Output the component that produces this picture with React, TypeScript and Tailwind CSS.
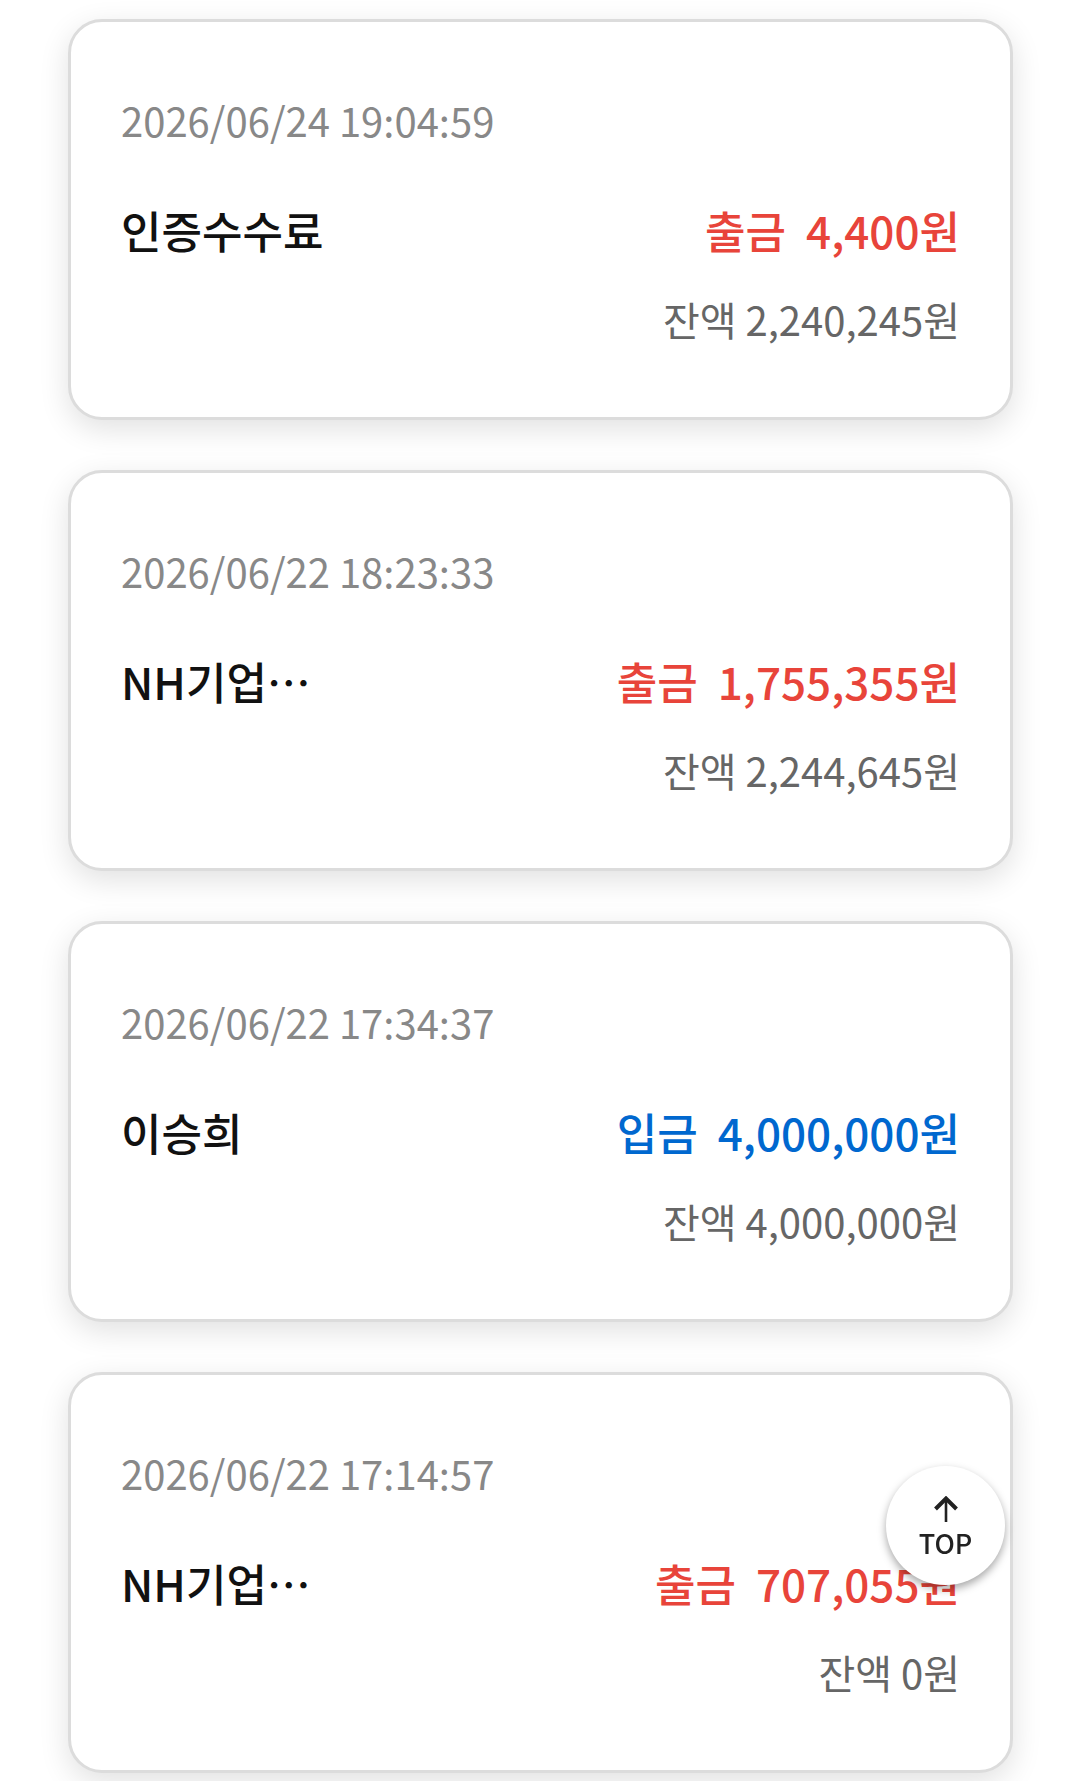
interface Transaction { id: number; date: string; name: string; kind: '입금' | '출금'; amount: string; balance: string }

const transactions: Transaction[] = [
  { id: 1, date: '2026/06/24 19:04:59', name: '인증수수료', kind: '출금', amount: '4,400', balance: '2,240,245' },
  { id: 2, date: '2026/06/22 18:23:33', name: 'NH기업⋯', kind: '출금', amount: '1,755,355', balance: '2,244,645' },
  { id: 3, date: '2026/06/22 17:34:37', name: '이승희', kind: '입금', amount: '4,000,000', balance: '4,000,000' },
  { id: 4, date: '2026/06/22 17:14:57', name: 'NH기업⋯', kind: '출금', amount: '707,055', balance: '0' },
]

export default function App() {
  return (
    <div className="bg-white font-['Noto_Sans_CJK_KR',sans-serif]">
      <ul className="flex flex-col gap-[50px] pt-[19px] pr-[67px] pb-2 pl-[68px]">
        {transactions.map(t => (
          <li key={t.id} className="rounded-[34px] border-3 border-[#dcdcdc] bg-white px-[50px] pt-[66px] pb-[66px] shadow-[0_9px_30px_rgba(0,0,0,0.12)]">
            <time className="block text-[40px] leading-[64px] text-[#888]">{t.date}</time>
            <div className="mt-[44px] flex items-center justify-between text-[44px] leading-[68px] font-medium">
              <strong className="font-medium text-[#111]">{t.name}</strong>
              <span className={`flex gap-[20px] ${t.kind === '입금' ? 'text-[#0068cf]' : 'text-[#e8443a]'}`}>
                <span>{t.kind}</span>
                <span>{t.amount}원</span>
              </span>
            </div>
            <p className="mt-[23px] text-right text-[40px] leading-[64px] text-[#666]">잔액 {t.balance}원</p>
          </li>
        ))}
      </ul>
      <button
        onClick={() => window.scrollTo({ top: 0, behavior: 'smooth' })}
        className="fixed right-[75px] bottom-[196px] flex size-[119px] flex-col items-center justify-center gap-1 rounded-full bg-white pt-[4px] text-[27px] leading-[34px] font-medium text-[#222] shadow-[0_4px_8px_rgba(0,0,0,0.35)]"
      >
        <svg width="24" height="26" viewBox="0 0 24 26" fill="none" stroke="currentColor" aria-hidden="true">
          <path d="M12 2V26" strokeWidth="2.6" />
          <path d="M1.5 13L12 2.5L22.5 13" strokeWidth="4" />
        </svg>
        TOP
      </button>
    </div>
  )
}
